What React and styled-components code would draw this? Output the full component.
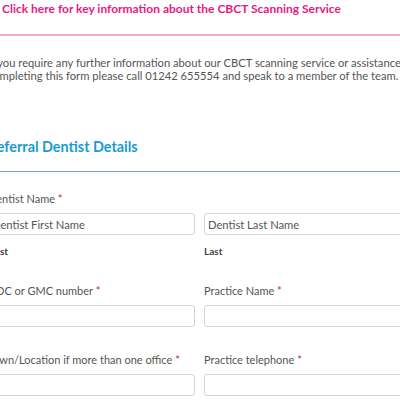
import styled, { createGlobalStyle } from 'styled-components';

const GlobalStyle = createGlobalStyle`
  html, body {
    margin: 0;
    padding: 0;
    background: #ffffff;
    overflow: hidden;
  }
  body {
    font-family: Lato, "Open Sans", sans-serif;
    color: #555;
  }
`;

const fields = [
  [
    { label: 'GDC or GMC number', required: true },
    { label: 'Practice Name', required: true },
  ],
  [
    { label: 'Town/Location if more than one office', required: true },
    { label: 'Practice telephone', required: true },
  ],
];

export default function App() {
  return (
    <>
      <GlobalStyle />
      <Page>
        <InfoLink href="#">Click here for key information about the CBCT Scanning Service</InfoLink>
        <PinkRule />
        <Content>
          <Intro>
            If you require any further information about our CBCT scanning service or assistance in
            completing this form please call 01242 655554 and speak to a member of the team.
          </Intro>
          <SectionTitle>Referral Dentist Details</SectionTitle>
          <SectionRule />

          <Field>
            <Label>Dentist Name <Req>*</Req></Label>
            <Row>
              <Column>
                <Input placeholder="Dentist First Name" />
                <SubLabel>First</SubLabel>
              </Column>
              <Column>
                <Input placeholder="Dentist Last Name" />
                <SubLabel>Last</SubLabel>
              </Column>
            </Row>
          </Field>

          {fields.map((row, i) => (
            <Row key={i} $gap={i === 0 ? 27 : 26}>
              {row.map((f) => (
                <Column key={f.label}>
                  <Label>{f.label} {f.required && <Req>*</Req>}</Label>
                  <Input />
                </Column>
              ))}
            </Row>
          ))}
        </Content>
      </Page>
    </>
  );
}

const Page = styled.div`
  width: 431px;
  margin-left: -20px;
`;

const InfoLink = styled.a`
  display: block;
  padding: 1px 0 0 22px;
  font-size: 12px;
  font-weight: 700;
  line-height: 16px;
  color: #e8197f;
  text-decoration: none;
`;

const PinkRule = styled.div`
  margin-top: 17px;
  height: 2px;
  background: #f5a9cc;
`;

const Content = styled.div`
  padding-left: 8px;
`;

const Intro = styled.p`
  width: 445px;
  margin: 20px 0 0;
  font-size: 11.2px;
  line-height: 13px;
  color: #555;
`;

const SectionTitle = styled.h2`
  margin: 56px 0 0;
  font-size: 14.4px;
  font-weight: 700;
  line-height: 18px;
  color: #1a9ad6;
`;

const SectionRule = styled.div`
  margin-top: 15px;
  height: 1px;
  background: #7f9cc7;
`;

const Field = styled.div`
  margin-top: 20px;
`;

const Row = styled.div`
  display: flex;
  gap: 9px;
  margin-top: ${({ $gap }) => ($gap ? `${$gap}px` : '0')};
`;

const Column = styled.div`
  flex: 1;
  display: flex;
  flex-direction: column;
`;

const Label = styled.label`
  display: block;
  font-size: 11px;
  line-height: 14px;
  margin-bottom: 7px;
  color: #555;
`;

const Req = styled.span`
  color: #c02b2b;
`;

const Input = styled.input`
  box-sizing: border-box;
  height: 22px;
  padding: 0 3px;
  border: 1px solid #d4d4d4;
  border-radius: 3px;
  font-family: Lato, "Open Sans", sans-serif;
  font-size: 11.2px;
  color: #555;
  background: #fff;
  outline: none;

  &::placeholder {
    color: #555;
  }
`;

const SubLabel = styled.span`
  margin-top: 10px;
  font-size: 10px;
  font-weight: 700;
  line-height: 12px;
  color: #444;
`;
